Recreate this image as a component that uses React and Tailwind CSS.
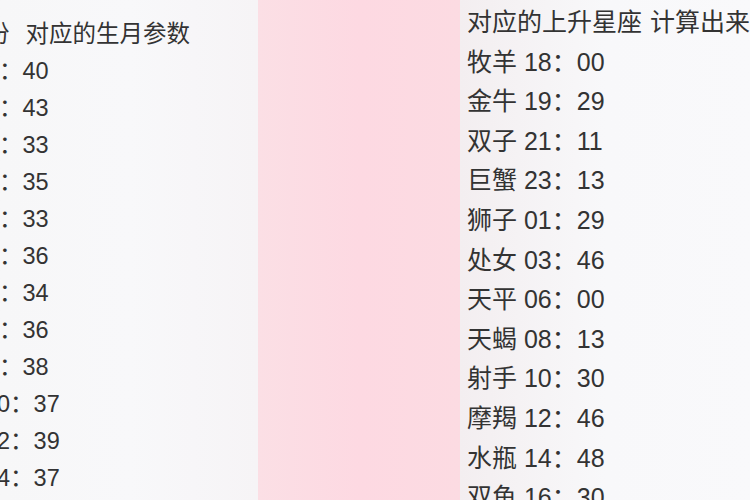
import React from 'react';

const leftRows = ['：40', '：43', '：33', '：35', '：33', '：36', '：34', '：36', '：38', '0：37', '2：39', '4：37'];

const rightRows = [
    ['牧羊', '18：00'],
    ['金牛', '19：29'],
    ['双子', '21：11'],
    ['巨蟹', '23：13'],
    ['狮子', '01：29'],
    ['处女', '03：46'],
    ['天平', '06：00'],
    ['天蝎', '08：13'],
    ['射手', '10：30'],
    ['摩羯', '12：46'],
    ['水瓶', '14：48'],
    ['双鱼', '16：30'],
];

const font = { fontFamily: '"Liberation Sans", "Noto Sans CJK SC", sans-serif' };

const App = () => {
    return (
        <div className="w-[750px] h-[500px] flex overflow-hidden bg-[#f7f7f8] text-[#333333]" style={font}>
            {/* Left list, clipped */}
            <div className="w-[258px] shrink-0 overflow-hidden bg-gradient-to-r from-[#f7f7f8] via-[#f8f8fa] to-[#f6f4f6] pt-[16px]">
                <div className="text-[23.5px] leading-[37px] whitespace-nowrap">
                    <div className="-ml-[14px]">
                        份<span className="ml-[16px]">对应的生月参数</span>
                    </div>
                    {leftRows.map((row, i) => (
                        <div key={i} className={i > 8 ? '-ml-[3px]' : '-ml-[1px]'}>
                            {row}
                        </div>
                    ))}
                </div>
            </div>

            {/* Pink block */}
            <div className="w-[202px] shrink-0 bg-gradient-to-r from-[#fbdfe5] via-[#fdd9e2] to-[#fcdbe2]"></div>

            {/* Right list */}
            <div className="flex-1 overflow-hidden bg-gradient-to-r from-[#f3eef0] via-[#f8f8fa] to-[#f9f9fb] pl-[7px] pt-[3px]">
                <div className="text-[25px] leading-[39.6px] whitespace-nowrap">
                    <div>
                        对应的上升星座<span className="ml-[8px]">计算出来</span>
                    </div>
                    {rightRows.map(([sign, time]) => (
                        <div key={sign}>
                            {sign} {time}
                        </div>
                    ))}
                </div>
            </div>
        </div>
    );
};

export default App;
